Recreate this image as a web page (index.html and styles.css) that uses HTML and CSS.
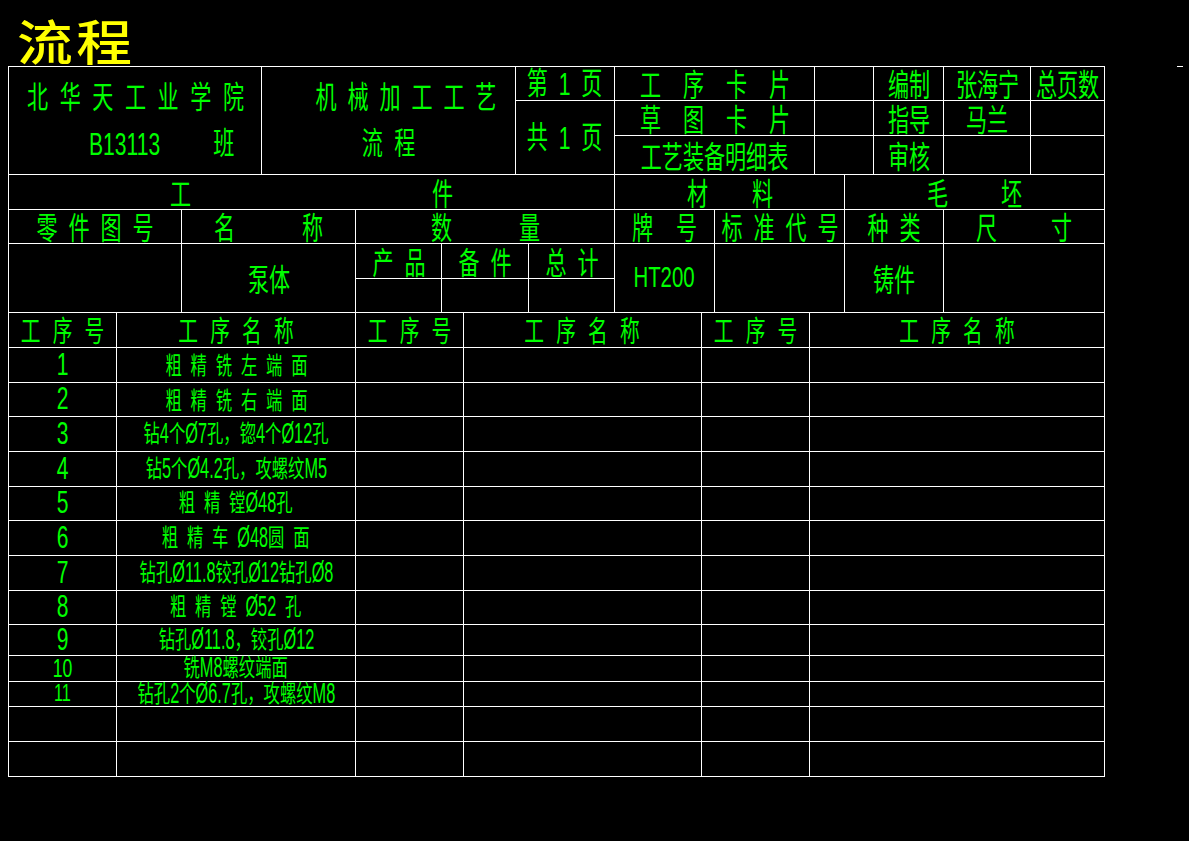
FILE: index.html
```html
<!DOCTYPE html>
<html lang="zh-CN">
<head>
<meta charset="utf-8">
<title>流程</title>
<link rel="stylesheet" href="styles.css">
</head>
<body>
<div class="title"><span class="tt">流程</span></div>
<div class="dash"></div>
<div class="sheet">
  <div class="sec s1">
    <div class="c r3 two">
      <span class="t f31 k17">北华天工业学院</span>
      <span class="t f31 a2"><span class="L">B13113</span><span class="gap">班</span></span>
    </div>
    <div class="c r3 two">
      <span class="t f31 k16 b1">机械加工工艺</span>
      <span class="t f31 k17">流程</span>
    </div>
    <div class="c"><span class="t f31 k16">第<span class="L">1</span>页</span></div>
    <div class="c g12"><span class="t f31">工</span><span class="t f31">序</span><span class="t f31">卡</span><span class="t f31">片</span></div>
    <div class="c"></div>
    <div class="c"><span class="t f31">编制</span></div>
    <div class="c"><span class="t f31">张海宁</span></div>
    <div class="c"><span class="t f31">总页数</span></div>

    <div class="c r2"><span class="t f31 k16">共<span class="L">1</span>页</span></div>
    <div class="c g12"><span class="t f31">草</span><span class="t f31">图</span><span class="t f31">卡</span><span class="t f31">片</span></div>
    <div class="c"></div>
    <div class="c"><span class="t f31">指导</span></div>
    <div class="c"><span class="t f31">马兰</span></div>
    <div class="c"></div>

    <div class="c"><span class="t f31">工艺装备明细表</span></div>
    <div class="c"></div>
    <div class="c"><span class="t f31">审核</span></div>
    <div class="c"></div>
    <div class="c"></div>
  </div>

  <div class="sec s2">
    <div class="c g231"><span class="t f31">工</span><span class="t f31">件</span></div>
    <div class="c g34"><span class="t f31">材</span><span class="t f31">料</span></div>
    <div class="c g43"><span class="t f31">毛</span><span class="t f31">坯</span></div>
  </div>

  <div class="sec s3">
    <div class="c"><span class="t f31 k16">零件图号</span></div>
    <div class="c g57"><span class="t f31">名</span><span class="t f31">称</span></div>
    <div class="c cs3 g57"><span class="t f31">数</span><span class="t f31">量</span></div>
    <div class="c g13"><span class="t f31">牌</span><span class="t f31">号</span></div>
    <div class="c"><span class="t f31 k16">标准代号</span></div>
    <div class="c"><span class="t f31 k16">种类</span></div>
    <div class="c g44"><span class="t f31">尺</span><span class="t f31">寸</span></div>

    <div class="c r2"></div>
    <div class="c r2"><span class="t f31">泵体</span></div>
    <div class="c"><span class="t f31 k16">产品</span></div>
    <div class="c"><span class="t f31 k16">备件</span></div>
    <div class="c"><span class="t f31 k16">总计</span></div>
    <div class="c r2"><span class="t L30">HT200</span></div>
    <div class="c r2"></div>
    <div class="c r2"><span class="t f31">铸件</span></div>
    <div class="c r2"></div>

    <div class="c"></div>
    <div class="c"></div>
    <div class="c"></div>
  </div>

  <div class="sec s4">
    <div class="c"><span class="t f29 k18">工序号</span></div>
    <div class="c"><span class="t f29 k18">工序名称</span></div>
    <div class="c"><span class="t f29 k18">工序号</span></div>
    <div class="c"><span class="t f29 k18">工序名称</span></div>
    <div class="c"><span class="t f29 k18">工序号</span></div>
    <div class="c"><span class="t f29 k18">工序名称</span></div>

    <div class="c"><span class="t num">1</span></div>
    <div class="c"><span class="t f24 k13">粗精铣左端面</span></div>
    <div class="c"></div><div class="c"></div><div class="c"></div><div class="c"></div>

    <div class="c"><span class="t num">2</span></div>
    <div class="c"><span class="t f24 k13">粗精铣右端面</span></div>
    <div class="c"></div><div class="c"></div><div class="c"></div><div class="c"></div>

    <div class="c"><span class="t num">3</span></div>
    <div class="c"><span class="t f24">钻<span class="l">4</span>个<span class="l">Ø7</span>孔，锪<span class="l">4</span>个<span class="l">Ø12</span>孔</span></div>
    <div class="c"></div><div class="c"></div><div class="c"></div><div class="c"></div>

    <div class="c"><span class="t num">4</span></div>
    <div class="c"><span class="t f24">钻<span class="l">5</span>个<span class="l">Ø4.2</span>孔，攻螺纹<span class="l">M5</span></span></div>
    <div class="c"></div><div class="c"></div><div class="c"></div><div class="c"></div>

    <div class="c"><span class="t num">5</span></div>
    <div class="c"><span class="t f24"><span class="w">粗精</span>镗<span class="l">Ø48</span>孔</span></div>
    <div class="c"></div><div class="c"></div><div class="c"></div><div class="c"></div>

    <div class="c"><span class="t num">6</span></div>
    <div class="c"><span class="t f24"><span class="w">粗精车</span><span class="l">Ø48</span><span class="w">圆</span>面</span></div>
    <div class="c"></div><div class="c"></div><div class="c"></div><div class="c"></div>

    <div class="c"><span class="t num">7</span></div>
    <div class="c"><span class="t f24">钻孔<span class="l">Ø11.8</span>铰孔<span class="l">Ø12</span>钻孔<span class="l">Ø8</span></span></div>
    <div class="c"></div><div class="c"></div><div class="c"></div><div class="c"></div>

    <div class="c"><span class="t num">8</span></div>
    <div class="c"><span class="t f24"><span class="w">粗精镗</span><span class="l mr">Ø52</span>孔</span></div>
    <div class="c"></div><div class="c"></div><div class="c"></div><div class="c"></div>

    <div class="c"><span class="t num">9</span></div>
    <div class="c"><span class="t f24">钻孔<span class="l">Ø11.8</span>，铰孔<span class="l">Ø12</span></span></div>
    <div class="c"></div><div class="c"></div><div class="c"></div><div class="c"></div>

    <div class="c"><span class="t num n10">10</span></div>
    <div class="c"><span class="t f24">铣<span class="l">M8</span>螺纹端面</span></div>
    <div class="c"></div><div class="c"></div><div class="c"></div><div class="c"></div>

    <div class="c"><span class="t num n11">11</span></div>
    <div class="c"><span class="t f24">钻孔<span class="l">2</span>个<span class="l">Ø6.7</span>孔，攻螺纹<span class="l">M8</span></span></div>
    <div class="c"></div><div class="c"></div><div class="c"></div><div class="c"></div>

    <div class="c"></div><div class="c"></div><div class="c"></div><div class="c"></div><div class="c"></div><div class="c"></div>
    <div class="c"></div><div class="c"></div><div class="c"></div><div class="c"></div><div class="c"></div><div class="c"></div>
  </div>
</div>
</body>
</html>
```

FILE: styles.css
```css
html, body {
  margin: 0;
  padding: 0;
  background: #000;
}

body {
  position: relative;
  width: 1189px;
  height: 841px;
  overflow: hidden;
  font-family: "Noto Sans CJK SC", sans-serif;
  color: #00ff00;
}

.title {
  height: 66px;
  box-sizing: border-box;
  padding: 15px 0 0 17px;
  font-size: 48px;
  line-height: 48px;
}

.tt {
  display: inline-block;
  vertical-align: top;
  color: #ffff00;
  font-weight: 500;
  font-size: 48px;
  line-height: 48px;
  letter-spacing: 3px;
  transform: scaleX(1.16);
  transform-origin: left center;
}

.dash {
  position: absolute;
  left: 1177px;
  top: 66px;
  width: 6px;
  height: 1px;
  background: #fff;
}

.sheet {
  margin-left: 8px;
  width: 1097px;
  box-sizing: border-box;
  padding: 1px;
  background: #fff;
  display: flex;
  flex-direction: column;
  gap: 1px;
}

.sec {
  display: grid;
  gap: 1px;
}

.s1 {
  grid-template-columns: 252px 253px 98px 199px 58px 69px 86px 73px;
  grid-template-rows: 33px 34px 38px;
}

.s2 {
  grid-template-columns: 605px 229px 259px;
  grid-template-rows: 34px;
}

.s3 {
  grid-template-columns: 172px 173px 85px 86px 85px 99px 129px 98px 160px;
  grid-template-rows: 33px 34px 33px;
}

.s4 {
  grid-template-columns: 107px 238px 107px 237px 107px 294px;
  grid-template-rows: 34px 34px 33px 34px 34px 33px 34px 34px 33px 30px 25px 24px 34px 34px;
}

.c {
  background: #000;
  display: flex;
  align-items: center;
  justify-content: center;
  min-width: 0;
}

.r2 { grid-row: span 2; }
.r3 { grid-row: span 3; }
.cs3 { grid-column: span 3; }

/* gaps between single characters that are spread across a cell */
.g12 { gap: 12px; }
.g13 { gap: 13px; }
.g34 { gap: 34px; }
.g43 { gap: 43px; }
.g44 { gap: 44px; }
.g57 { gap: 57px; }
.g231 { gap: 231px; }

.two {
  flex-direction: column;
  justify-content: flex-start;
  box-sizing: border-box;
  padding-top: 13px;
  gap: 15px;
}

.b1 { margin-left: 35px; }

.a2 {
  align-self: flex-start;
  margin-left: 80px;
  transform-origin: left center;
}

.gap { margin-left: 78px; }

.t {
  display: inline-block;
  white-space: nowrap;
  line-height: 1;
  transform: translateY(-1px) scaleX(0.68);
}

.f31 { font-size: 31px; }
.f29 { font-size: 29px; }
.f24 { font-size: 24px; }

.L {
  font-family: "Liberation Sans", sans-serif;
  font-size: 31px;
  vertical-align: -1px;
}

.L30 {
  font-family: "Liberation Sans", sans-serif;
  font-size: 30px;
}

/* Latin runs inside the small row texts: narrow and stretched tall, like the CAD font */
.l {
  display: inline-block;
  font-family: "Liberation Sans", sans-serif;
  font-size: 24px;
  line-height: 1;
  vertical-align: -1px;
  transform: scaleY(1.25);
  transform-origin: 50% 20px;
}

.num {
  font-family: "Liberation Sans", sans-serif;
  font-size: 31px;
}

.n10 { font-size: 26px; }
.n11 { font-size: 24px; }

.w { letter-spacing: 13px; }
.mr { margin-right: 13px; }

.k13 { letter-spacing: 13px; padding-left: 13px; }
.k16 { letter-spacing: 16px; padding-left: 16px; }
.k17 { letter-spacing: 17px; padding-left: 17px; }
.k18 { letter-spacing: 18px; padding-left: 18px; }
```
